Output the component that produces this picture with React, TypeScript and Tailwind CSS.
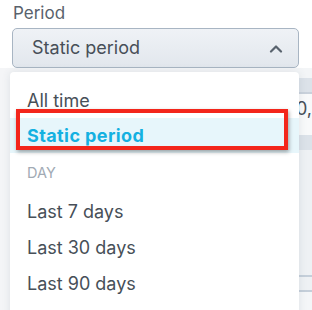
import React from "react";

export default function App() {
  const font = { fontFamily: '"Inter", "Noto Sans", sans-serif' };
  return (
    <div className="relative w-[312px] h-[310px] overflow-hidden bg-white text-[#474f58]" style={font}>
      {/* underlying page */}
      <div className="pl-[13px] pt-[3px] h-[28px] text-[17px] leading-[20px] text-[#59626c]">Period</div>
      <div className="ml-[12px] w-[287px] h-[40px] rounded-[5px] border border-[#a8b5c3] bg-gradient-to-b from-[#eff2f6] to-[#e2e7ed] flex items-center justify-between pl-[19px] pr-[15px]">
        <span className="text-[18px] leading-none">Static period</span>
        <svg width="14" height="9" viewBox="0 0 14 9" fill="none">
          <path d="M2 7.5 L7 2.5 L12 7.5" stroke="#59636e" strokeWidth="2.2" strokeLinecap="round" strokeLinejoin="round" />
        </svg>
      </div>
      <div className="flex h-[242px]">
        <div className="w-[300px] bg-[#f4f5f7]" />
        <div className="flex-1 flex flex-col">
          <div className="h-[10px] bg-[#f3f5f7]" />
          <div className="h-[16px] bg-[#dce2e9] border-b-2 border-[#c9d1db]" />
          <div className="h-[41px] bg-[#f8f9fa] text-[18px] leading-[20px] pt-[5px] text-[#474f58]">0,</div>
          <div className="h-[15px] bg-[#dce2e9]" />
          <div className="h-[125px] bg-[#eef1f4]" />
          <div className="h-[2px] bg-[#c5cfda]" />
          <div className="h-[13px] bg-[#eef1f4]" />
          <div className="h-[2px] bg-[#c5cfda]" />
          <div className="flex-1 bg-[#f4f6f8]" />
        </div>
      </div>

      {/* dropdown menu */}
      <div className="absolute left-[10px] top-[72px] w-[289px] h-[250px] bg-white rounded-t-[4px] shadow-[0_0_8px_rgba(60,80,100,0.12)] pt-[10px]">
        <div className="h-[36px] flex items-center pl-[17px] text-[18px]">All time</div>
        <div className="h-[35px] flex items-center pl-[17px] text-[18px] font-bold tracking-[0.4px] text-[#14b1e1] bg-[#e7f6fb]">Static period</div>
        <div className="h-[40px] flex items-center pl-[17px] text-[14.5px] text-[#a1aab4]">DAY</div>
        <div className="h-[36px] flex items-center pl-[17px] text-[18px]">Last 7 days</div>
        <div className="h-[36px] flex items-center pl-[17px] text-[18px]">Last 30 days</div>
        <div className="h-[36px] flex items-center pl-[17px] text-[18px]">Last 90 days</div>
      </div>

      {/* annotation box */}
      <div className="absolute left-[16px] top-[109px] w-[272px] h-[41px] border-[4px] border-[#f3261b] shadow-[1px_2px_4px_rgba(0,0,0,0.35)]" />
    </div>
  );
}
